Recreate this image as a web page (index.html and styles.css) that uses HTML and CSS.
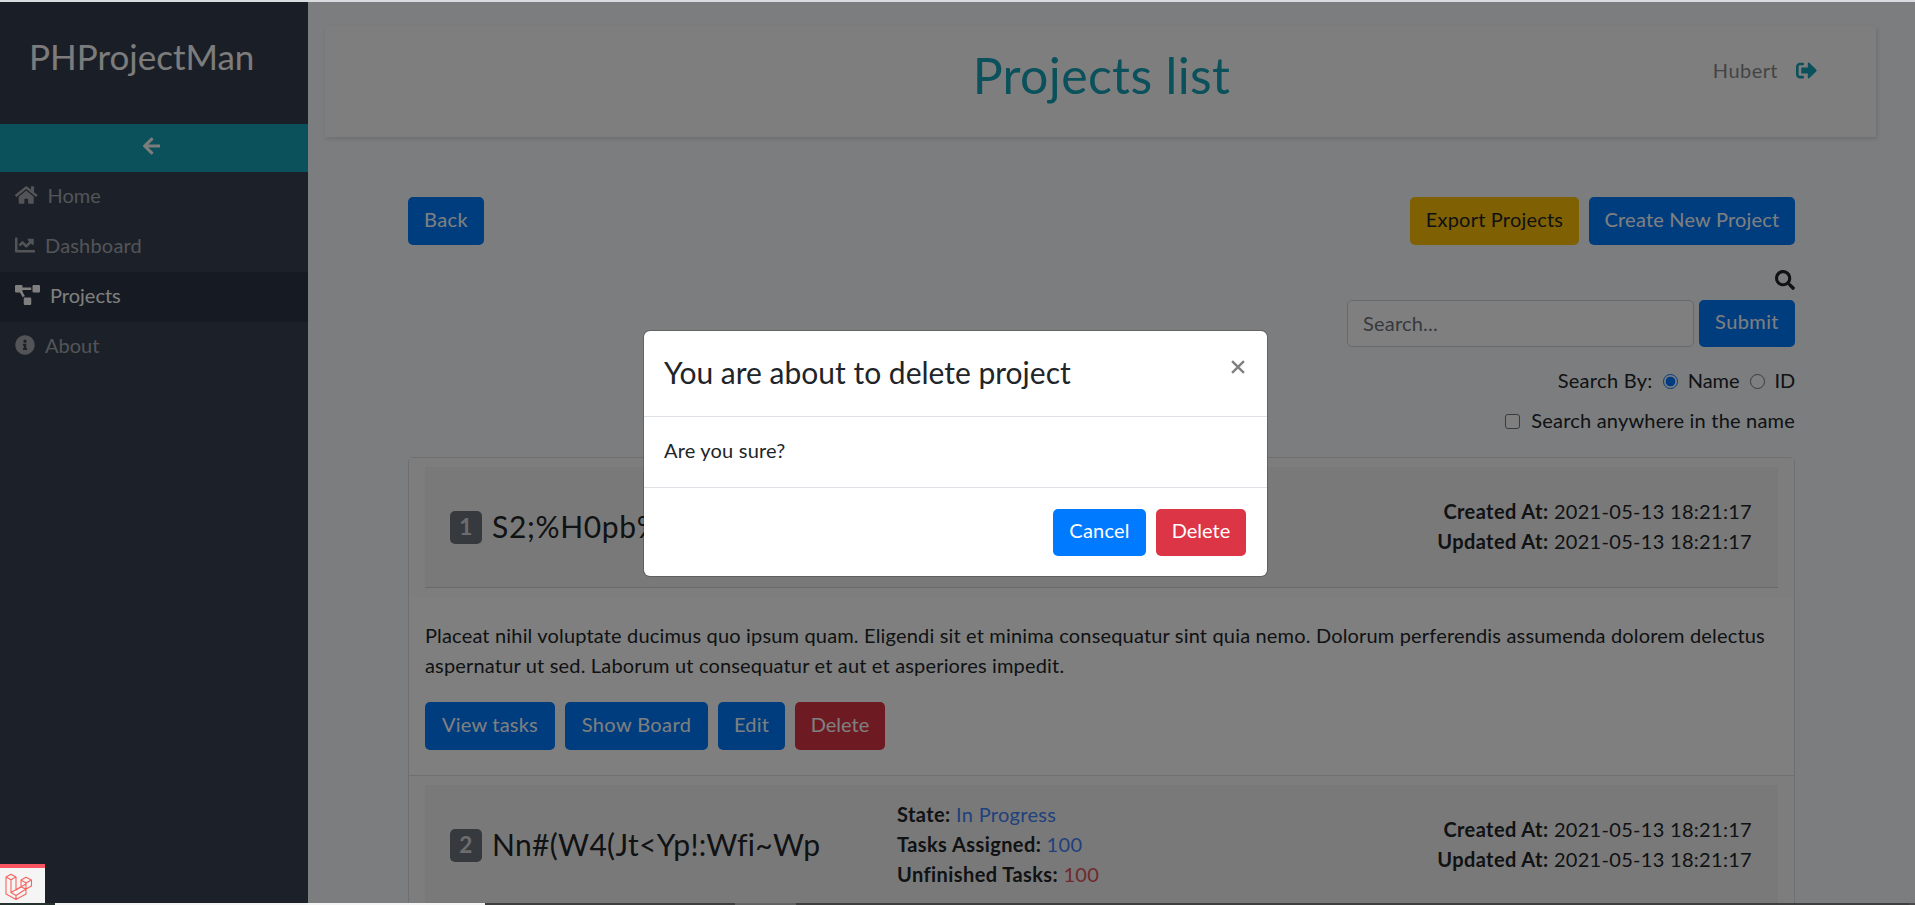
FILE: index.html
```html
<!DOCTYPE html>
<html lang="en">
<head>
<meta charset="utf-8">
<title>PHProjectMan</title>
<link rel="stylesheet" href="styles.css">
</head>
<body>
<div class="topline"></div>
<div class="app">
  <nav class="sidebar">
    <div class="brand">PHProjectMan</div>
    <div class="collapse"><svg class="ic" width="17.5" height="20" viewBox="0 0 448 512"><path d="M257.5 445.1l-22.2 22.2c-9.4 9.4-24.6 9.4-33.9 0L7 273c-9.4-9.4-9.4-24.6 0-33.9L201.4 44.7c9.4-9.4 24.6-9.4 33.9 0l22.2 22.2c9.5 9.5 9.3 25-.4 34.3L136.6 216H424c13.3 0 24 10.7 24 24v32c0 13.3-10.7 24-24 24H136.6l120.5 114.8c9.8 9.3 10 24.8.4 34.3z"/></svg></div>
    <a class="nav"><svg class="ic" width="22.5" height="20" viewBox="0 0 576 512"><path d="M280.37 148.26L96 300.11V464a16 16 0 0 0 16 16l112.06-.29a16 16 0 0 0 15.92-16V368a16 16 0 0 1 16-16h64a16 16 0 0 1 16 16v95.64a16 16 0 0 0 16 16.05L464 480a16 16 0 0 0 16-16V300L295.67 148.26a12.19 12.19 0 0 0-15.3 0zM571.6 251.47L488 182.56V44.05a12 12 0 0 0-12-12h-56a12 12 0 0 0-12 12v72.61L318.47 43a48 48 0 0 0-61 0L4.34 251.47a12 12 0 0 0-1.6 16.9l25.5 31A12 12 0 0 0 45.15 301l235.22-193.74a12.19 12.19 0 0 1 15.3 0L530.9 301a12 12 0 0 0 16.9-1.6l25.5-31a12 12 0 0 0-1.7-16.93z"/></svg><span>Home</span></a>
    <a class="nav"><svg class="ic" width="20" height="20" viewBox="0 0 512 512"><path d="M496 384H64V80c0-8.84-7.16-16-16-16H16C7.16 64 0 71.16 0 80v336c0 17.67 14.33 32 32 32h464c8.84 0 16-7.16 16-16v-32c0-8.84-7.16-16-16-16zM464 96H345.94c-21.38 0-32.09 25.85-16.97 40.97l32.4 32.4L288 242.75l-73.37-73.37c-12.5-12.5-32.76-12.5-45.25 0l-68.69 68.69c-6.25 6.25-6.25 16.38 0 22.63l22.62 22.62c6.25 6.25 16.38 6.25 22.63 0L192 237.25l73.37 73.37c12.5 12.5 32.76 12.5 45.25 0l96-96 32.4 32.4c15.12 15.12 40.97 4.41 40.97-16.97V112c.01-8.84-7.15-16-15.99-16z"/></svg><span class="wide">Dashboard</span></a>
    <a class="nav active"><svg class="ic" width="25" height="20" viewBox="0 0 640 512"><path d="M384 320H256c-17.67 0-32 14.33-32 32v128c0 17.67 14.33 32 32 32h128c17.67 0 32-14.33 32-32V352c0-17.67-14.33-32-32-32zM192 32c0-17.67-14.33-32-32-32H32C14.33 0 0 14.33 0 32v128c0 17.67 14.33 32 32 32h95.72l73.16 128.04C211.98 300.98 232.4 288 256 288h.28L192 175.51V128h224V64H192V32zM608 0H480c-17.67 0-32 14.33-32 32v128c0 17.67 14.33 32 32 32h128c17.67 0 32-14.33 32-32V32c0-17.67-14.33-32-32-32z"/></svg><span>Projects</span></a>
    <a class="nav"><svg class="ic" width="20" height="20" viewBox="0 0 512 512"><path d="M256 8C119.043 8 8 119.083 8 256c0 136.997 111.043 248 248 248s248-111.003 248-248C504 119.083 392.957 8 256 8zm0 110c23.196 0 42 18.804 42 42s-18.804 42-42 42-42-18.804-42-42 18.804-42 42-42zm56 254c0 6.627-5.373 12-12 12h-88c-6.627 0-12-5.373-12-12v-24c0-6.627 5.373-12 12-12h12v-64h-12c-6.627 0-12-5.373-12-12v-24c0-6.627 5.373-12 12-12h64c6.627 0 12 5.373 12 12v100h12c6.627 0 12 5.373 12 12v24z"/></svg><span>About</span></a>
  </nav>
  <main class="content">
    <header class="header">
      <h1>Projects list</h1>
      <div class="user"><span>Hubert</span><svg class="ic" width="21" height="21" viewBox="0 0 512 512"><path d="M497 273L329 441c-15 15-41 4.5-41-17v-96H152c-13.3 0-24-10.7-24-24v-96c0-13.3 10.7-24 24-24h136V88c0-21.4 25.9-32 41-17l168 168c9.3 9.4 9.3 24.6 0 34zM192 436v-40c0-6.6-5.4-12-12-12H96c-17.7 0-32-14.3-32-32V160c0-17.7 14.3-32 32-32h84c6.6 0 12-5.4 12-12V76c0-6.6-5.4-12-12-12H96c-53 0-96 43-96 96v192c0 53 43 96 96 96h84c6.6 0 12-5.4 12-12z"/></svg></div>
    </header>
    <div class="container">
      <div class="actions">
        <a class="btn w-back">Back</a>
        <span class="grow"></span>
        <a class="btn warn w-export">Export Projects</a>
        <a class="btn w-create">Create New Project</a>
      </div>
      <div class="search">
        <svg class="ic" width="20" height="20" viewBox="0 0 512 512"><path d="M505 442.7L405.3 343c-4.5-4.5-10.6-7-17-7H372c27.6-35.3 44-79.7 44-128C416 93.1 322.9 0 208 0S0 93.1 0 208s93.1 208 208 208c48.3 0 92.7-16.4 128-44v16.3c0 6.4 2.5 12.5 7 17l99.7 99.7c9.4 9.4 24.6 9.4 33.9 0l28.3-28.3c9.4-9.4 9.4-24.6.1-34zM208 336c-70.7 0-128-57.2-128-128 0-70.7 57.2-128 128-128 70.7 0 128 57.2 128 128 0 70.7-57.2 128-128 128z"/></svg>
        <div class="search-row"><div class="input">Search...</div><a class="btn w-submit">Submit</a></div>
        <div class="opts by"><span class="bytext">Search By:</span><i class="radio on"></i><span class="name">Name</span><i class="radio"></i><span class="id">ID</span></div>
        <div class="opts any"><i class="check"></i><span class="anytext">Search anywhere in the name</span></div>
      </div>
      <div class="cards">
        <section class="card">
          <div class="card-head">
            <div class="panel">
              <div class="ttl"><b class="badge">1</b><span class="t1">S2;%H0pb%</span></div>
              <div class="state"></div>
              <div class="dates"><div><b>Created At:</b> 2021-05-13 18:21:17</div><div><b>Updated At:</b> 2021-05-13 18:21:17</div></div>
            </div>
          </div>
          <div class="card-body">
            <p>Placeat nihil voluptate ducimus quo ipsum quam. Eligendi sit et minima consequatur sint quia nemo. Dolorum perferendis assumenda dolorem delectus<br>aspernatur ut sed. Laborum ut consequatur et aut et asperiores impedit.</p>
            <div class="buttons"><a class="btn w-view">View tasks</a><a class="btn w-board">Show Board</a><a class="btn w-edit">Edit</a><a class="btn danger w-del">Delete</a></div>
          </div>
        </section>
        <section class="card">
          <div class="card-head">
            <div class="panel">
              <div class="ttl"><b class="badge">2</b><span class="t2">Nn#(W4(Jt&lt;Yp!:Wfi~Wp</span></div>
              <div class="state"><div><b>State:</b> <span class="blue">In Progress</span></div><div><b>Tasks Assigned:</b> <span class="blue">100</span></div><div><b>Unfinished Tasks:</b> <span class="red">100</span></div></div>
              <div class="dates"><div><b>Created At:</b> 2021-05-13 18:21:17</div><div><b>Updated At:</b> 2021-05-13 18:21:17</div></div>
            </div>
          </div>
        </section>
      </div>
    </div>
  </main>
  <div class="backdrop">
    <div class="modal">
      <div class="modal-head"><span>You are about to delete project</span><svg width="14" height="14" viewBox="0 0 13 13"><path d="M1 1l11 11M12 1L1 12"/></svg></div>
      <div class="modal-body">Are you sure?</div>
      <div class="modal-foot"><a class="btn w-cancel">Cancel</a><a class="btn danger w-mdel">Delete</a></div>
    </div>
  </div>
  <div class="debug"><svg width="28" height="28" viewBox="0 0 28 28"><path d="M1 4L6 1.2L11 4V17L16 14V7L21 4.2L26.5 7V13L21 16V21L11 26.5L1 21ZM1 4L6 6.8L11 4M6 6.8V19.5L11 22.5V26.5M6 19.5L21 11V16L11 22.5M16 7L21 10L26.5 7M21 10V16M16 14L21 16M11 17L16 14"/></svg></div>
</div>
<div class="bottomline"><i class="b1"></i><i class="b2"></i><i class="b3"></i><i class="b4"></i><i class="b5"></i><i class="b6"></i></div>
</body>
</html>
```
FILE: styles.css
```css
* { box-sizing: border-box; }
body {
  margin: 0; width: 1915px; height: 905px; overflow: hidden;
  display: grid; grid-template-rows: 2px 901px 2px;
  font: 20px/30px Lato, "Open Sans", sans-serif; letter-spacing: .2px; color: #212529;
}
.ic { fill: currentColor; display: block; flex: none; }
.topline { background: #d8dce0; }
.app { position: relative; display: flex; overflow: hidden; background: #f8fafc; }

.sidebar { width: 308px; flex: none; background: #384252; color: #f8f8f8; }
.brand { height: 122px; padding: 33px 0 0 29px; background: #343c4c; font-size: 35px; line-height: 42px; letter-spacing: 0; }
.collapse { height: 48px; background: #17a2b8; display: flex; justify-content: center; padding: 12px 5px 0 0; }
.nav { height: 50px; padding: 8px 0 0 15px; display: flex; color: #a6a9b0; font-weight: 400; letter-spacing: 0; }
.nav .ic { margin: 5px 10px 0 0; }
.nav .wide { letter-spacing: .19px; }
.nav.active { background: #2c3544; color: #fff; }

.content { flex: 1; padding: 24px 39px 0 17px; }
.header { position: relative; height: 111px; width: 1551px; background: #fdfdfd; box-shadow: 1px 2px 4px rgba(0,0,0,.12); display: flex; justify-content: center; }
h1 { margin: 19px 0 0 2px; font-size: 50px; line-height: 60px; font-weight: 400; letter-spacing: .35px; color: #17a2b8; }
.user { position: absolute; top: 29px; right: 59px; display: flex; gap: 18px; color: #888; letter-spacing: .45px; }
.user .ic { margin-top: 5px; color: #17a2b8; }

.container { width: 1387px; margin: 60px 0 0 83px; }
.btn { height: 48px; border-radius: 5px; background: #007bff; color: #fff; text-align: center; line-height: 45px; flex: none; display: block; }
.warn { background: #ffc107; color: #212529; }
.danger { background: #dc3545; }
.actions { display: flex; gap: 10px; }
.grow { flex: 1; }
.w-back { width: 76px; letter-spacing: .4px; }
.w-export { width: 169px; }
.w-create { width: 206px; }
.w-submit { width: 96px; height: 47px; letter-spacing: .4px; line-height: 43px; }
.search { display: flex; flex-direction: column; align-items: flex-end; padding-top: 25px; }
.search-row { display: flex; gap: 5px; margin-top: 10px; }
.input { width: 347px; height: 47px; border: 1px solid #ced4da; border-radius: 5px; background: #fff; padding: 7px 15px; color: #6c757d; }
.opts { display: flex; align-items: center; height: 30px; }
.opts span { padding-bottom: 2px; }
.by { margin-top: 19px; }
.any { margin-top: 10px; }
.radio, .check { width: 15px; height: 15px; border: 1px solid #767676; background: #fff; flex: none; }
.radio { border-radius: 50%; }
.radio.on { border: 1px solid #0075ff; background: radial-gradient(circle, #0075ff 0 4.6px, #fff 5.2px); }
.check { border-radius: 3px; margin-right: 11px; }
.bytext { letter-spacing: .3px; margin-right: 10px; }
.name { margin: 0 10px 0 10px; letter-spacing: 0; }
.id { margin-left: 10px; letter-spacing: -.2px; }

.cards { margin-top: 21px; border: 1px solid #dfdfdf; border-bottom: 0; border-radius: 5px 5px 0 0; background: #fff; }
.card + .card { border-top: 1px solid #dfdfdf; }
.card-head { padding: 9px 16px; background: #fafafa; }
.panel { height: 121px; background: #f3f3f3; border-bottom: 1px solid #d2d2d2; display: grid; grid-template-columns: 447px 1fr 340px; padding: 0 26px 0 25px; align-items: center; }
.ttl { display: flex; align-items: center; gap: 10px; font-size: 30px; line-height: 36px; white-space: nowrap; }
.ttl span { padding-bottom: 3px; }
.badge { width: 32px; height: 33px; border-radius: 5px; background: #6c757d; color: #d8dadc; font-size: 22.5px; line-height: 32px; text-align: center; }
.t1 { letter-spacing: .65px; }
.t2 { letter-spacing: .3px; }
.state, .dates { padding-bottom: 2px; white-space: nowrap; }
.state b, .dates b { letter-spacing: .42px; }
.dates { text-align: right; letter-spacing: .3px; }
.blue { color: #3f82f8; letter-spacing: .3px; }
.red { color: #e3505a; letter-spacing: .3px; }
.card-body { padding: 23px 16px 25px; }
p { margin: 0 0 22px; letter-spacing: .17px; white-space: nowrap; }
.buttons { display: flex; gap: 10px; }
.w-view { width: 130px; }
.w-board { width: 143px; letter-spacing: .4px; }
.w-edit { width: 67px; }
.w-del { width: 90px; letter-spacing: 0; }

.backdrop { position: absolute; inset: 0; background: rgba(0,0,0,.5); padding: 329px 0 0 644px; }
.modal { width: 623px; height: 245px; background: #fff; background-clip: padding-box; border-radius: 6px; box-shadow: 0 0 0 1px rgba(0,0,0,.2); }
.modal-head { height: 86px; border-bottom: 1px solid #dee2e6; padding: 23px 22px 0 20px; display: flex; justify-content: space-between; font-size: 30px; line-height: 36px; letter-spacing: 0; }
.modal-head svg { margin-top: 6px; stroke: #808080; stroke-width: 2.2; fill: none; }
.modal-body { height: 71px; border-bottom: 1px solid #dee2e6; padding: 18px 20px; }
.modal-foot { display: flex; gap: 10px; justify-content: flex-end; padding: 21px 21px; }
.modal-foot .btn { height: 47px; line-height: 43px; }
.w-cancel { width: 93px; }
.w-mdel { width: 90px; letter-spacing: 0; }

.debug { position: absolute; left: 0; bottom: 0; width: 45px; height: 39px; background: #f5f5f5; border-top: 4px solid #fa5661; padding: 5px 0 0 5px; }
.debug svg { display: block; fill: none; stroke: #f4645f; stroke-width: 1.1; stroke-linejoin: round; }
.bottomline { display: flex; }
.b1 { width: 55px; background: #26332f; }
.b2 { width: 430px; background: #f4f4f4; }
.b3 { width: 250px; background: #3f3f3f; }
.b4 { width: 61px; background: #626262; }
.b5 { flex: 1; background: #3f3f3f; }
.b6 { width: 6px; background: #4a4a4a; }
```
